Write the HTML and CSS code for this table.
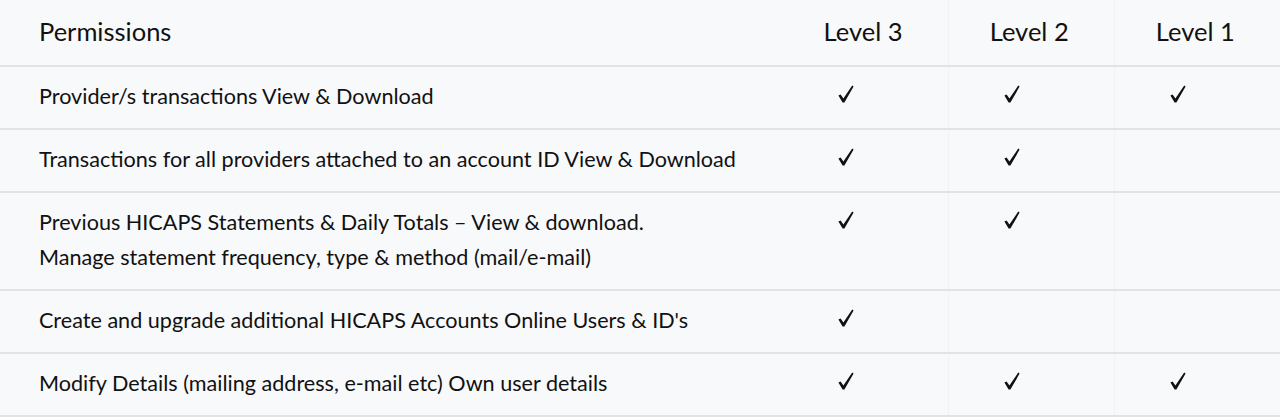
FILE: index.html
```html
<!DOCTYPE html>
<html lang="en">
<head>
<meta charset="utf-8">
<title>Permissions</title>
<link rel="stylesheet" href="styles.css">
</head>
<body>
<table class="perm-table">
  <thead>
    <tr>
      <th class="col-name">Permissions</th>
      <th class="col-level">Level 3</th>
      <th class="col-level">Level 2</th>
      <th class="col-level">Level 1</th>
    </tr>
  </thead>
  <tbody>
    <tr>
      <td class="col-name">Provider/s transactions View &amp; Download</td>
      <td class="col-level"><svg class="check" viewBox="0 0 16 18"><path d="M0.4 10.6 L2.6 9.4 L5.4 13.6 L14.2 0.6 L15.6 1.6 L6.4 17.6 L4.6 17.6 Z"/></svg></td>
      <td class="col-level"><svg class="check" viewBox="0 0 16 18"><path d="M0.4 10.6 L2.6 9.4 L5.4 13.6 L14.2 0.6 L15.6 1.6 L6.4 17.6 L4.6 17.6 Z"/></svg></td>
      <td class="col-level"><svg class="check" viewBox="0 0 16 18"><path d="M0.4 10.6 L2.6 9.4 L5.4 13.6 L14.2 0.6 L15.6 1.6 L6.4 17.6 L4.6 17.6 Z"/></svg></td>
    </tr>
    <tr>
      <td class="col-name">Transactions for all providers attached to an account ID View &amp; Download</td>
      <td class="col-level"><svg class="check" viewBox="0 0 16 18"><path d="M0.4 10.6 L2.6 9.4 L5.4 13.6 L14.2 0.6 L15.6 1.6 L6.4 17.6 L4.6 17.6 Z"/></svg></td>
      <td class="col-level"><svg class="check" viewBox="0 0 16 18"><path d="M0.4 10.6 L2.6 9.4 L5.4 13.6 L14.2 0.6 L15.6 1.6 L6.4 17.6 L4.6 17.6 Z"/></svg></td>
      <td class="col-level"></td>
    </tr>
    <tr>
      <td class="col-name">Previous HICAPS Statements &amp; Daily Totals – View &amp; download.<br>Manage statement frequency, type &amp; method (mail/e-mail)</td>
      <td class="col-level"><svg class="check" viewBox="0 0 16 18"><path d="M0.4 10.6 L2.6 9.4 L5.4 13.6 L14.2 0.6 L15.6 1.6 L6.4 17.6 L4.6 17.6 Z"/></svg></td>
      <td class="col-level"><svg class="check" viewBox="0 0 16 18"><path d="M0.4 10.6 L2.6 9.4 L5.4 13.6 L14.2 0.6 L15.6 1.6 L6.4 17.6 L4.6 17.6 Z"/></svg></td>
      <td class="col-level"></td>
    </tr>
    <tr>
      <td class="col-name">Create and upgrade additional HICAPS Accounts Online Users &amp; ID's</td>
      <td class="col-level"><svg class="check" viewBox="0 0 16 18"><path d="M0.4 10.6 L2.6 9.4 L5.4 13.6 L14.2 0.6 L15.6 1.6 L6.4 17.6 L4.6 17.6 Z"/></svg></td>
      <td class="col-level"></td>
      <td class="col-level"></td>
    </tr>
    <tr>
      <td class="col-name">Modify Details (mailing address, e-mail etc) Own user details</td>
      <td class="col-level"><svg class="check" viewBox="0 0 16 18"><path d="M0.4 10.6 L2.6 9.4 L5.4 13.6 L14.2 0.6 L15.6 1.6 L6.4 17.6 L4.6 17.6 Z"/></svg></td>
      <td class="col-level"><svg class="check" viewBox="0 0 16 18"><path d="M0.4 10.6 L2.6 9.4 L5.4 13.6 L14.2 0.6 L15.6 1.6 L6.4 17.6 L4.6 17.6 Z"/></svg></td>
      <td class="col-level"><svg class="check" viewBox="0 0 16 18"><path d="M0.4 10.6 L2.6 9.4 L5.4 13.6 L14.2 0.6 L15.6 1.6 L6.4 17.6 L4.6 17.6 Z"/></svg></td>
    </tr>
  </tbody>
</table>
</body>
</html>
```
FILE: styles.css
```css
html, body {
  margin: 0;
  padding: 0;
  background: #f8f9fb;
}
body {
  font-family: Lato, "Open Sans", sans-serif;
  color: #111111;
}
.perm-table {
  width: 1280px;
  border-collapse: collapse;
  table-layout: fixed;
}
.perm-table th,
.perm-table td {
  text-align: left;
  vertical-align: top;
  border-bottom: 2px solid #e2e3e5;
  font-weight: 400;
}
.perm-table th {
  font-size: 25.5px;
  line-height: 35px;
  padding-top: 14px;
  padding-bottom: 16px;
}
.perm-table td {
  font-size: 21.6px;
  line-height: 35px;
  padding-top: 12px;
  padding-bottom: 14px;
}
.perm-table .col-name {
  width: 742px;
  padding-left: 39px;
  padding-right: 0;
}
.perm-table .col-level {
  width: 124px;
  padding-left: 42px;
  padding-right: 0;
}
.perm-table td.col-level + td.col-level,
.perm-table th.col-level + th.col-level {
  box-shadow: inset 1px 0 0 #f1f2f4;
}
.check {
  display: block;
  width: 16px;
  height: 18px;
  margin: 6px 0 0 14px;
  fill: #111111;
}
```
